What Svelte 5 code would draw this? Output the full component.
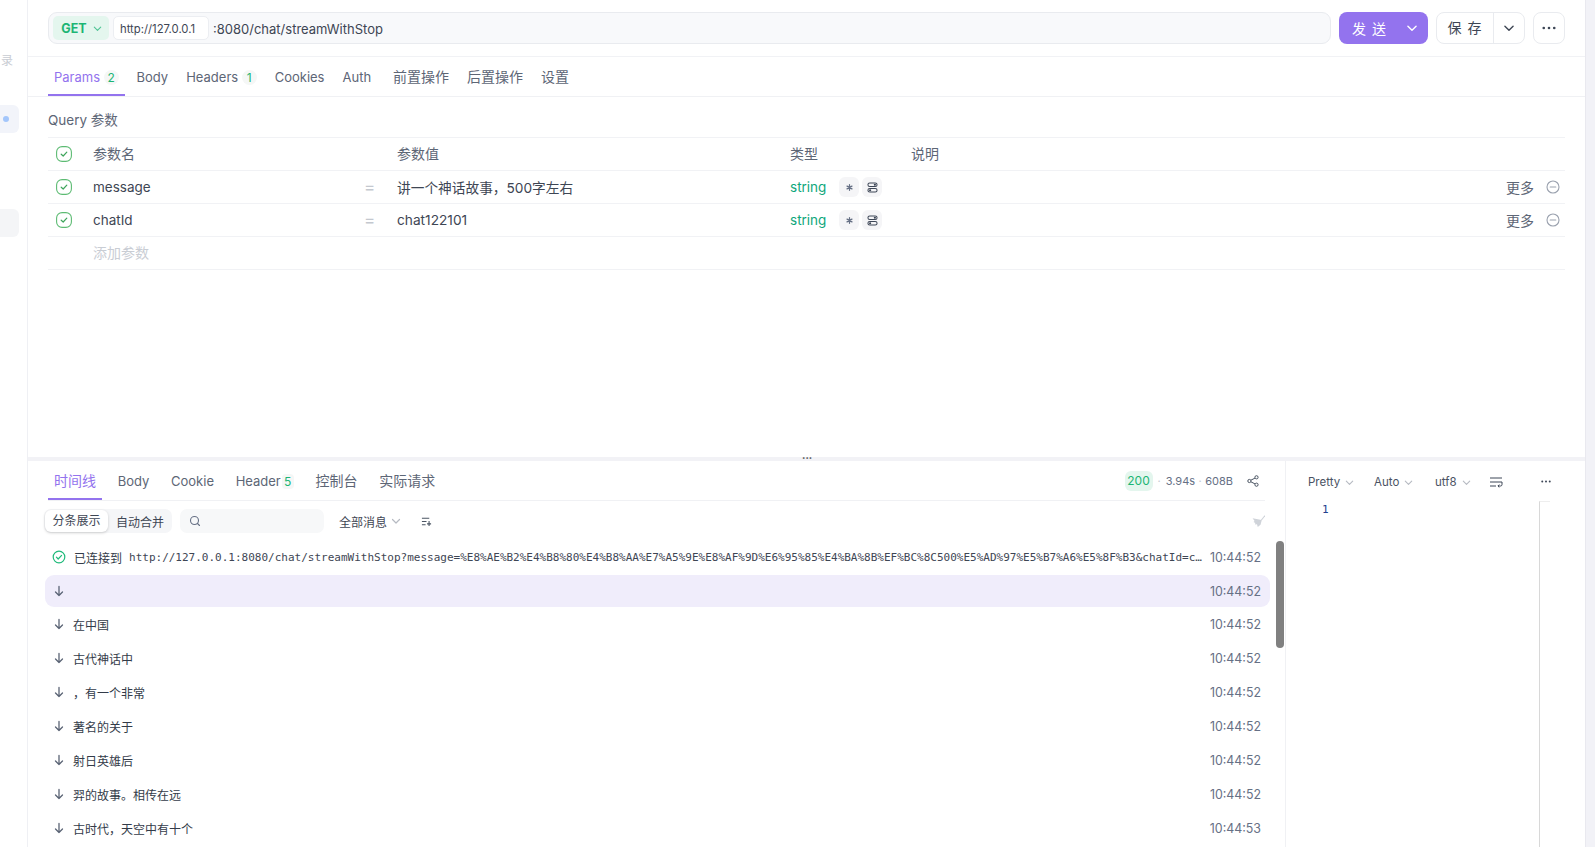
<script>
  const params = [
    { name: 'message', value: '讲一个神话故事，500字左右' },
    { name: 'chatId', value: 'chat122101' }
  ];
  const url = 'http://127.0.0.1:8080/chat/streamWithStop?message=%E8%AE%B2%E4%B8%80%E4%B8%AA%E7%A5%9E%E8%AF%9D%E6%95%85%E4%BA%8B%EF%BC%8C500%E5%AD%97%E5%B7%A6%E5%8F%B3&chatId=chat122101';
  const msgs = [
    { text: '', time: '10:44:52', active: true },
    { text: '在中国', time: '10:44:52' },
    { text: '古代神话中', time: '10:44:52' },
    { text: '，有一个非常', time: '10:44:52' },
    { text: '著名的关于', time: '10:44:52' },
    { text: '射日英雄后', time: '10:44:52' },
    { text: '羿的故事。相传在远', time: '10:44:52' },
    { text: '古时代，天空中有十个', time: '10:44:53' }
  ];
</script>

{#snippet chev(cls)}
  <svg class={cls} viewBox="0 0 12 12" fill="none" stroke="currentColor" stroke-width="1.2" stroke-linecap="round" stroke-linejoin="round"><path d="M2.5 4.5 6 8l3.5-3.5" /></svg>
{/snippet}
{#snippet check()}
  <svg class="chk" viewBox="0 0 16 16" fill="none"><rect x="0.6" y="0.6" width="14.8" height="14.8" rx="5.5" stroke="#5dbb73" stroke-width="1.1" /><path d="M5.2 8.2 7.2 10l3.6-3.8" stroke="#3fa55c" stroke-width="1.2" stroke-linecap="round" stroke-linejoin="round" /></svg>
{/snippet}
{#snippet arrow()}
  <svg class="arrow" viewBox="0 0 12 12" fill="none" stroke="#5b6475" stroke-width="1.3" stroke-linecap="round" stroke-linejoin="round"><path d="M6 1.5v9M2.5 7 6 10.5 9.5 7" /></svg>
{/snippet}

<div class="page">
  <aside class="side">
    <span class="lu">录</span>
    <div class="pill blue"><i></i></div>
    <div class="pill grey"></div>
  </aside>

  <main class="main">
    <header class="head">
      <div class="urlbar">
        <div class="method">GET {@render chev('mchev')}</div>
        <div class="host">http://127.0.0.1</div>
        <span class="path">:8080/chat/streamWithStop</span>
      </div>
      <div class="send"><span>发 送</span>{@render chev('schev')}</div>
      <div class="save"><span class="savet">保 存</span><span class="savec">{@render chev('svchev')}</span></div>
      <div class="more">
        <svg viewBox="0 0 16 4" width="14" height="4" fill="#3d4656"><circle cx="2" cy="2" r="1.5" /><circle cx="8" cy="2" r="1.5" /><circle cx="14" cy="2" r="1.5" /></svg>
      </div>
    </header>

    <nav class="tabs top">
      <span class="tab on">Params<b class="bdg">2</b></span>
      <span class="tab">Body</span>
      <span class="tab">Headers<b class="bdg">1</b></span>
      <span class="tab">Cookies</span>
      <span class="tab">Auth</span>
      <span class="tab cn sp">前置操作</span>
      <span class="tab cn">后置操作</span>
      <span class="tab cn">设置</span>
    </nav>

    <section class="query">
      <div class="qlabel">Query 参数</div>
      <div class="row hd">
        <span class="c0">{@render check()}</span>
        <span class="c1">参数名</span><span class="eq"></span><span class="c2">参数值</span><span class="c3">类型</span><span class="c4">说明</span>
      </div>
      {#each params as p}
        <div class="row">
          <span class="c0">{@render check()}</span>
          <span class="c1 dark">{p.name}</span>
          <span class="eq">=</span>
          <span class="c2 dark">{p.value}</span>
          <span class="c3 str">string</span>
          <span class="c4 chips">
            <span class="chip"><svg viewBox="0 0 10 10" width="7" height="7" stroke="#667085" stroke-width="1.8" stroke-linecap="round"><path d="M5 1v8M1.5 3l7 4M8.5 3l-7 4" /></svg></span>
            <span class="chip"><svg viewBox="0 0 12 12" width="11" height="11" fill="none" stroke="#3d4656" stroke-width="1.1"><rect x="1" y="1" width="10" height="4" rx="2" /><rect x="1" y="7" width="10" height="4" rx="2" /><circle cx="8.6" cy="3" r="1.2" fill="#3d4656" stroke="none" /><circle cx="3.4" cy="9" r="1.2" fill="#3d4656" stroke="none" /></svg></span>
          </span>
          <span class="c5">更多
            <svg viewBox="0 0 14 14" width="14" height="14" fill="none" stroke="#9aa1ae" stroke-width="1.1"><circle cx="7" cy="7" r="6" /><path d="M4.2 7h5.6" stroke-linecap="round" /></svg>
          </span>
        </div>
      {/each}
      <div class="row add"><span class="c0"></span><span class="c1">添加参数</span></div>
    </section>

    <div class="split"><span class="grip">•••</span></div>

    <section class="bottom">
      <div class="left">
        <nav class="tabs low">
          <span class="tab on cn">时间线</span>
          <span class="tab">Body</span>
          <span class="tab">Cookie</span>
          <span class="tab">Header<b class="bdg sm">5</b></span>
          <span class="tab cn">控制台</span>
          <span class="tab cn">实际请求</span>
          <span class="stat">
            <b class="ok">200</b><em>·</em>3.94s<em class="e2">·</em>608B
            <svg class="share" viewBox="0 0 12 12" width="12" height="12" fill="none" stroke="#4b5563" stroke-width="1"><circle cx="9.5" cy="2.3" r="1.6" /><circle cx="2.4" cy="6" r="1.6" /><circle cx="9.5" cy="9.7" r="1.6" /><path d="M3.9 5.2 8 3.1M3.9 6.8 8 8.9" /></svg>
          </span>
        </nav>
        <div class="tools">
          <div class="seg"><span class="segon">分条展示</span><span class="segoff">自动合并</span></div>
          <div class="search">
            <svg viewBox="0 0 12 12" width="12" height="12" fill="none" stroke="#667085" stroke-width="1.1" stroke-linecap="round"><circle cx="5.5" cy="5.5" r="4" /><path d="m8.5 8.5 2 2" /></svg>
          </div>
          <span class="all">全部消息 {@render chev('achev')}</span>
          <svg class="sorti" viewBox="0 0 12 12" width="11" height="11" fill="none" stroke="#4b5563" stroke-width="1.2"><path d="M1 2.5h8M1 6h5M1 9.5h4M8.8 5.5v5.5M6.6 8.6h4.4" /></svg>
          <svg class="broom" viewBox="0 0 14 14" width="13" height="13" fill="#cfd3d9"><path d="M13.6 0.4 9.4 5.4l.9.9 3.9-5.3z" /><path d="M9 5 .6 3.6 2.8 6.4 1.6 7.6l2 .9-.4 1.6 2.2-.1.8 3 3-2.4 1.2-4.6z" /></svg>
        </div>
        <div class="list">
          <div class="msg first">
            <svg class="okc" viewBox="0 0 14 14" width="14" height="14" fill="none" stroke="#1fba7a" stroke-width="1.2" stroke-linecap="round" stroke-linejoin="round"><circle cx="7" cy="7" r="5.8" /><path d="M4.4 7.2 6.2 9l3.4-3.6" /></svg>
            <span class="mt">已连接到</span>
            <span class="mono">{url}</span>
            <span class="tm">10:44:52</span>
          </div>
          {#each msgs as m}
            <div class="msg" class:act={m.active}>
              {@render arrow()}
              <span class="mt">{m.text}</span>
              <span class="tm">{m.time}</span>
            </div>
          {/each}
          <div class="thumb"></div>
        </div>
      </div>
      <div class="right">
        <div class="rtools">
          <span class="ropt w1">Pretty {@render chev('rchev')}</span>
          <span class="ropt w2">Auto {@render chev('rchev')}</span>
          <span class="ropt w3">utf8 {@render chev('rchev')}</span>
          <svg class="wrapi" viewBox="0 0 14 12" width="14" height="12" fill="none" stroke="#3d4656" stroke-width="1"><path d="M1 2h12M1 6h12M1 10h6M13 6v2.5a1.5 1.5 0 0 1-1.5 1.5H9M10.3 8.6 8.9 10l1.4 1.4" /></svg>
          <svg class="rdots" viewBox="0 0 12 3" width="10" height="3" fill="#3d4656"><circle cx="1.5" cy="1.5" r="1.2" /><circle cx="6" cy="1.5" r="1.2" /><circle cx="10.5" cy="1.5" r="1.2" /></svg>
        </div>
        <div class="editor">
          <span class="ln">1</span>
          <div class="mini"></div>
        </div>
      </div>
    </section>
  </main>
  <div class="gutter"></div>
</div>

<style>
  :global(body) { margin: 0; background: #fff; }
  .page {
    width: 1595px; height: 847px; overflow: hidden; display: flex;
    font-family: Inter, "Noto Sans CJK SC", sans-serif; font-size: 13px; color: #4a5363;
  }
  .side { width: 27px; flex: none; border-right: 1px solid #eff0f4; position: relative; display: flex; flex-direction: column; align-items: flex-start; }
  .lu { margin: 52px 0 0 1px; font-size: 12px; color: #c8ccd3; height: 18px; line-height: 18px; }
  .pill { width: 19px; height: 28px; border-radius: 0 6px 6px 0; display: flex; align-items: center; }
  .blue { margin-top: 35px; background: #f2f4fa; }
  .blue i { width: 6px; height: 6px; border-radius: 50%; background: #a3c6fb; margin-left: 3px; }
  .grey { margin-top: 76px; background: #f4f5f7; }

  .main { flex: 1; min-width: 0; display: flex; flex-direction: column; }
  .gutter { width: 10px; flex: none; background: #f2f2f7; border-left: 1px solid #e9e9ef; box-sizing: border-box; }

  .head { height: 57px; flex: none; box-sizing: border-box; border-bottom: 1px solid #f1f2f5; display: flex; align-items: flex-start; padding: 12px 20px 0 20px; gap: 8px; }
  .urlbar { width: 1283px; height: 32px; box-sizing: border-box; flex: none; background: #f8f9fb; border: 1px solid #e9ebef; border-radius: 9px; display: flex; align-items: center; padding-left: 4px; }
  .method { width: 56px; height: 24px; border-radius: 5px; background: #e4f6ee; color: #1cb574; font-weight: 700; font-size: 12.5px; display: flex; align-items: center; justify-content: center; gap: 5px; padding-left: 2px; box-sizing: border-box; }
  :global(.mchev) { width: 11px; height: 11px; color: #4fc395; }
  .host { margin-left: 4px; width: 96px; height: 24px; line-height: 24px; box-sizing: border-box; padding-left: 6px; background: #fff; border: 1px solid #eceef2; border-radius: 5px; font-size: 11.3px; color: #3e4654; }
  .path { margin-left: 4px; font-size: 13px; line-height: 20px; padding-top: 2px; color: #3e4654; }
  .send { width: 89px; height: 32px; border-radius: 8px; flex: none; background: #9373ee; color: #fff; display: flex; align-items: center; font-size: 14px; padding-left: 13px; box-sizing: border-box; position: relative; }
  .send span { letter-spacing: 1px; }
  :global(.schev) { width: 14px; height: 14px; position: absolute; right: 9px; top: 9px; }
  .save { width: 89px; height: 32px; box-sizing: border-box; flex: none; border: 1px solid #e9ebef; border-radius: 8px; display: flex; align-items: center; color: #3e4654; font-size: 14px; }
  .savet { width: 56px; text-align: center; border-right: 1px solid #e9ebef; line-height: 30px; letter-spacing: 1px; }
  .savec { flex: 1; display: flex; justify-content: center; }
  :global(.svchev) { width: 14px; height: 14px; }
  .more { width: 32px; height: 32px; box-sizing: border-box; flex: none; border: 1px solid #e9ebef; border-radius: 8px; display: flex; align-items: center; justify-content: center; }

  .tabs { display: flex; align-items: center; box-sizing: border-box; flex: none; }
  .top { height: 40px; padding-left: 20px; border-bottom: 1px solid #f0f1f4; gap: 6px; }
  .tab { position: relative; display: block; height: 39px; padding: 0 6px; color: #5d6676; font-size: 13px; line-height: 41px; white-space: nowrap; }
  .tab.cn { font-size: 14px; line-height: 39px; }
  .tab.sp { margin-left: 4px; }
  .tab.on { color: #9373ee; }
  .tab.on::after { content: ''; position: absolute; left: 0; right: 0; bottom: 0; height: 2px; background: #9373ee; }
  .bdg { display: inline-block; width: 15px; height: 15px; line-height: 15px; border-radius: 50%; text-align: center; background: #f5f7f6; color: #1cb574; font-size: 12px; font-weight: 400; margin-left: 3.5px; }
  .bdg.sm { width: 12px; margin-left: 1px; border-radius: 4px; }

  .query { height: 360px; flex: none; box-sizing: border-box; padding: 0 20px; }
  .qlabel { height: 40px; line-height: 47px; font-size: 13.5px; color: #5d6676; }
  .row { height: 33px; border-top: 1px solid #f1f2f5; box-sizing: border-box; display: flex; align-items: center; position: relative; font-size: 13.5px; }
  .hd > span:not(.c0), .add .c1 { padding-bottom: 2px; font-size: 14px; }
  .add { border-bottom: 1px solid #f1f2f5; height: 34px; color: #c9cdd4; }
  .c0 { width: 45px; display: flex; padding-left: 8px; box-sizing: border-box; flex: none; }
  :global(.chk) { width: 16px; height: 16px; }
  .c1 { width: 276px; flex: none; box-sizing: border-box; }
  .hd .c1, .hd .c2, .hd .c3, .hd .c4 { color: #5d6676; }
  .eq { width: 28px; flex: none; color: #c4c8cf; font-size: 17px; line-height: 18px; position: relative; left: -5px; }
  .c2 { width: 393px; flex: none; }
  .c2.dark { font-size: 13.7px; }
  .dark { color: #3e4654; }
  .c3 { width: 49px; flex: none; }
  .hd .c3 { width: 121px; }
  .str { color: #0fa77c; }
  .chips { display: flex; gap: 3px; }
  .chip { width: 20px; height: 20px; border-radius: 6px; background: #f5f5f7; display: flex; align-items: center; justify-content: center; }
  .c5 { margin-left: auto; padding-right: 5px; display: flex; align-items: center; gap: 12px; color: #5d6676; font-size: 14px; }

  .split { height: 4px; flex: none; background: #f2f2f6; position: relative; }
  .grip { position: absolute; left: 774px; top: -3px; font-size: 6px; line-height: 8px; color: #555; }

  .bottom { flex: 1; min-height: 0; display: flex; overflow: hidden; }
  .left { width: 1258px; flex: none; box-sizing: border-box; border-right: 1px solid #f0f1f4; }
  .low { height: 40px; margin: 0 20px; border-bottom: 1px solid #f0f1f4; gap: 9.7px; }
  .stat { margin-left: auto; margin-right: 6px; display: flex; align-items: center; font-size: 11px; color: #667085; }
  .stat em { font-style: normal; margin: 0 5px; color: #c4c8cf; }
  .stat em.e2 { margin: 0 3.5px; }
  .ok { width: 28px; height: 20px; line-height: 20px; font-size: 12px; text-align: center; background: #e4f6ee; color: #1cb574; border-radius: 6px; font-weight: 400; }
  .share { margin-left: 14px; }

  .tools { height: 40px; padding: 0 20px 0 16px; display: flex; align-items: center; position: relative; }
  .seg { width: 128px; height: 24px; box-sizing: border-box; border-radius: 7px; background: #f5f6f8; display: flex; align-items: center; font-size: 12px; color: #3e4654; }
  .segon { width: 63px; height: 22px; line-height: 22px; text-align: center; background: #fff; border-radius: 6px; box-shadow: 0 1px 3px rgba(0,0,0,.18); margin-left: 1px; }
  .segoff { flex: 1; text-align: center; }
  .search { width: 144px; height: 24px; margin-left: 8px; border-radius: 7px; background: #f7f8f9; display: flex; align-items: center; padding-left: 9px; box-sizing: border-box; }
  .all { margin-left: 15px; font-size: 12px; color: #3e4654; display: flex; align-items: center; gap: 3px; }
  :global(.achev) { width: 12px; height: 12px; color: #b6bac2; }
  .sorti { margin-left: 19px; }
  .broom { margin-left: auto; }

  .list { position: relative; padding: 0 17px; height: 320px; }
  .msg { height: 32px; margin-bottom: 2px; border-radius: 9px; display: flex; align-items: center; padding: 0 9px 0 7px; box-sizing: border-box; width: 1225px; }
  .msg.first { height: 34px; padding-bottom: 2px; margin-bottom: 0; }
  .act { background: #f0edfb; margin-bottom: 1px; }
  :global(.arrow) { width: 12px; height: 12px; flex: none; margin-left: 1px; }
  .okc { flex: none; }
  .mt { margin-left: 8px; font-size: 12px; color: #333b49; white-space: nowrap; }
  .mono { margin-left: 7px; font-family: "DejaVu Sans Mono", "Liberation Mono", monospace; font-size: 11px; color: #3e4654; flex: 1; min-width: 0; overflow: hidden; white-space: nowrap; text-overflow: ellipsis; }
  .tm { margin-left: auto; padding-left: 4px; font-size: 12.4px; color: #667085; flex: none; }
  .thumb { position: absolute; left: 1248px; top: 0; width: 8px; height: 107px; border-radius: 4px; background: #808080; }

  .right { flex: 1; min-width: 0; position: relative; }
  .rtools { height: 40px; position: relative; font-size: 11.5px; color: #4a5363; }
  .ropt { position: absolute; top: 1px; line-height: 40px; display: flex; align-items: center; gap: 4px; }
  .w1 { left: 22px; } .w2 { left: 88px; } .w3 { left: 149px; }
  :global(.rchev) { width: 11px; height: 11px; color: #b6bac2; }
  .wrapi { position: absolute; left: 203px; top: 15px; }
  .rdots { position: absolute; left: 255px; top: 19px; }
  .editor { position: relative; height: 346px; }
  .ln { position: absolute; left: 36px; top: 2px; font-family: "DejaVu Sans Mono", monospace; font-size: 11px; color: #23408e; }
  .mini { position: absolute; left: 253px; top: 0; width: 11px; height: 346px; border-left: 1px solid #d8d8d8; border-top: 1px solid #eee; box-sizing: border-box; }
</style>
